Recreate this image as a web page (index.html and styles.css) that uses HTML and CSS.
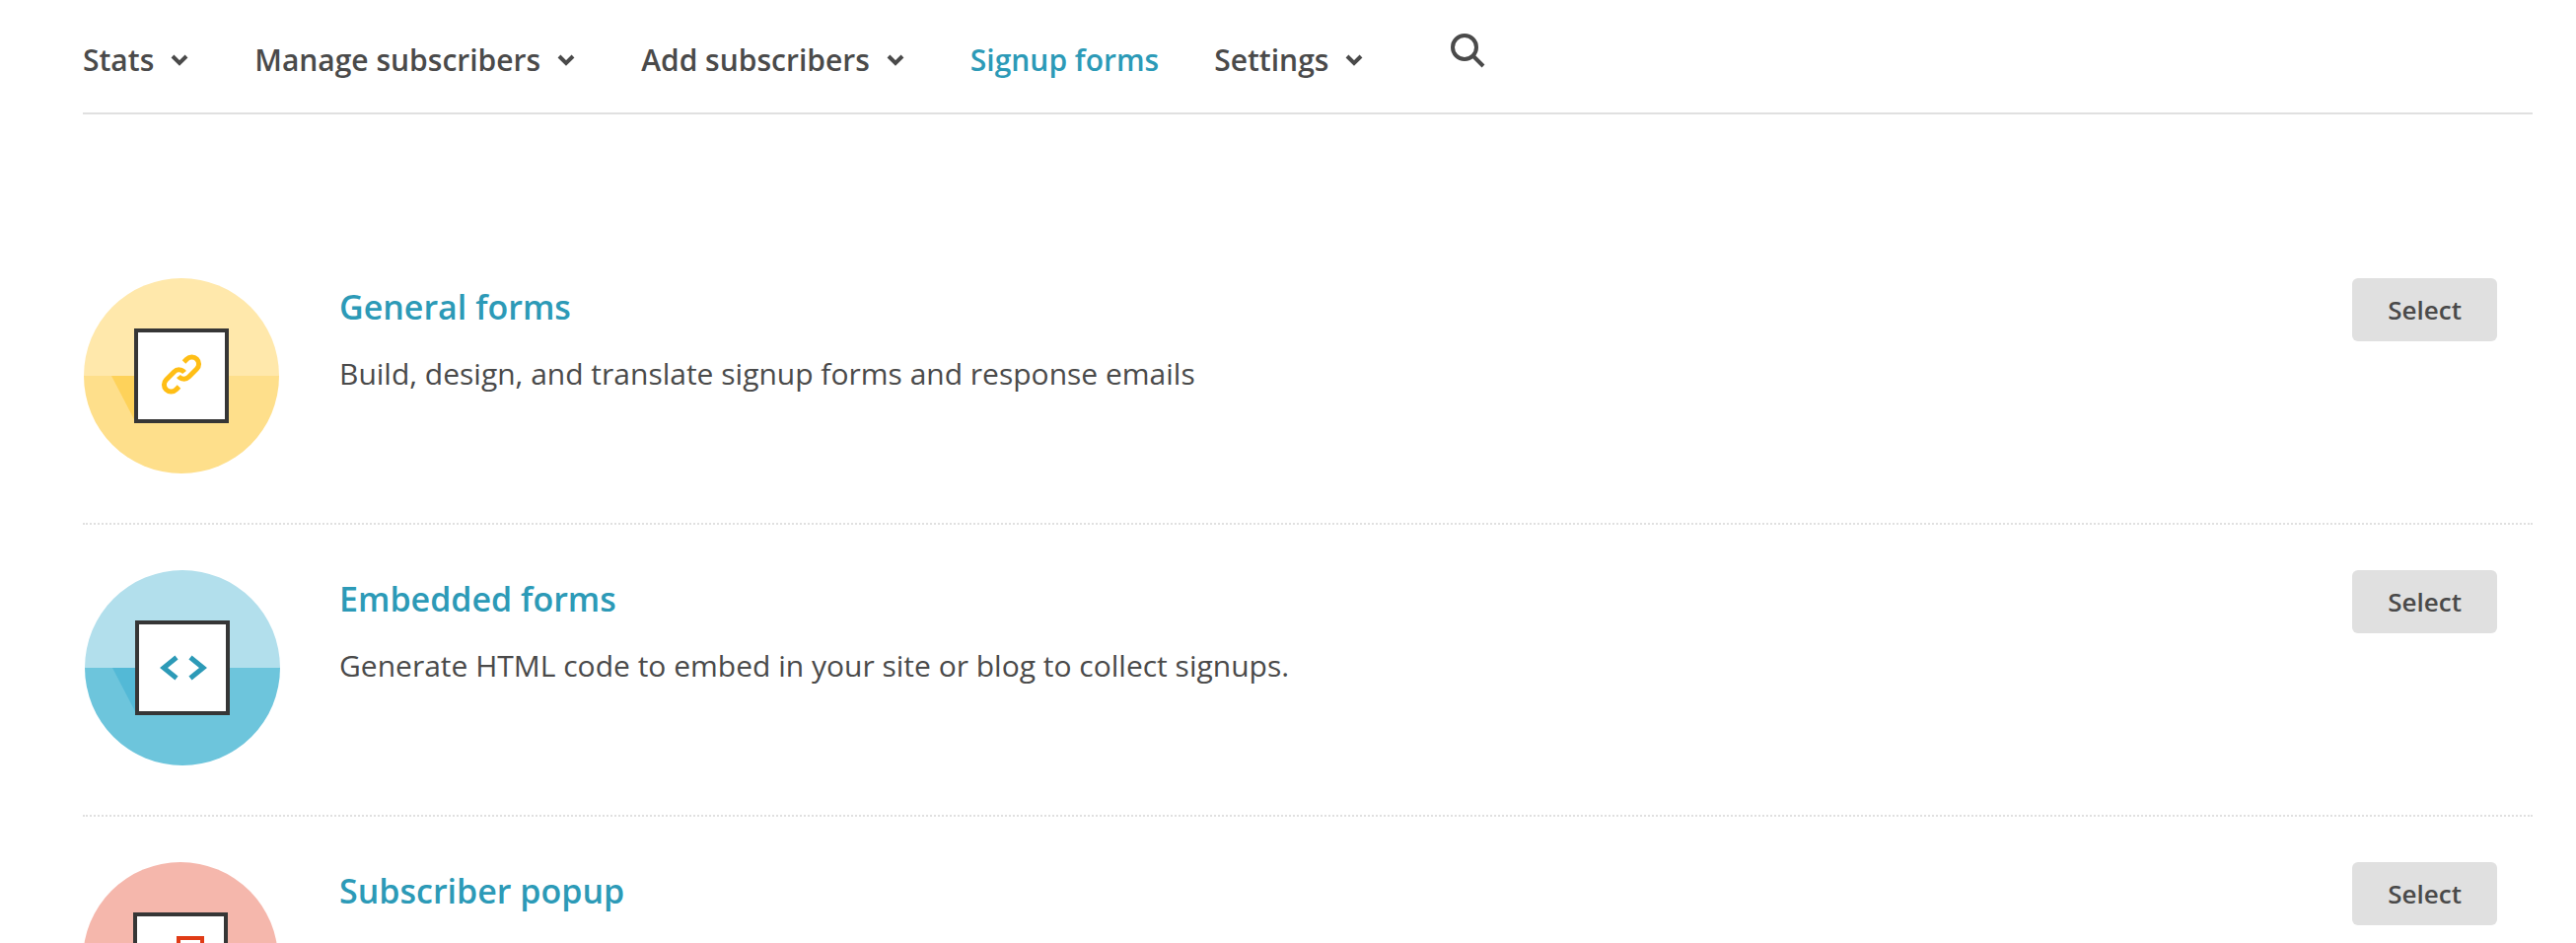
FILE: index.html
```
<!DOCTYPE html>
<html lang="en">
<head>
<meta charset="utf-8">
<meta name="viewport" content="width=device-width, initial-scale=1">
<title>Signup forms</title>
<link rel="stylesheet" href="styles.css">
</head>
<body>
<nav class="nav" aria-label="List">
  <button class="nav-item" type="button">Stats <svg class="chevron" viewBox="0 0 18 16" aria-hidden="true"><path d="M2 4l7 7 7-7"/></svg></button>
  <button class="nav-item" type="button">Manage subscribers <svg class="chevron" viewBox="0 0 18 16" aria-hidden="true"><path d="M2 4l7 7 7-7"/></svg></button>
  <button class="nav-item" type="button">Add subscribers <svg class="chevron" viewBox="0 0 18 16" aria-hidden="true"><path d="M2 4l7 7 7-7"/></svg></button>
  <a class="nav-item current" href="#" aria-current="page">Signup forms</a>
  <button class="nav-item" type="button">Settings <svg class="chevron" viewBox="0 0 18 16" aria-hidden="true"><path d="M2 4l7 7 7-7"/></svg></button>
  <button class="search" type="button" aria-label="Search"><svg class="search-icon" viewBox="0 0 36 36" aria-hidden="true"><circle cx="14" cy="14" r="12"/><path d="M22.500 22.500L33 33"/></svg></button>
</nav>
<main class="forms">
  <section class="form-row">
    <svg class="badge" viewBox="0 0 200 200" aria-hidden="true">
      <path fill="#ffe8ab" d="M1 99a99 99 0 0 1 198 0z"/>
      <path fill="#fedf8b" d="M1 99a99 99 0 0 0 198 0z"/>
      <path fill="#fed25a" d="M29 99h25v48z"/>
      <rect x="54" y="53" width="92" height="92" fill="#fff" stroke="#363636" stroke-width="4"/>
      <g fill="none" stroke="#ffbe15" stroke-width="5" transform="translate(100 97.500)">
        <path d="M2.500-12.500l3-3a7 7 0 0 1 10 10l-8 8a7 7 0 0 1-10.500-.5"/>
        <path d="M-2.500 12.500l-3 3a7 7 0 0 1-10-10l8-8a7 7 0 0 1 10.500.5"/>
      </g>
    </svg>
    <div class="info">
      <h2 class="title"><a href="#">General forms</a></h2>
      <p class="text">Build, design, and translate signup forms and response emails</p>
    </div>
    <button class="select" type="button">Select</button>
  </section>
  <section class="form-row">
    <svg class="badge" viewBox="0 0 200 200" aria-hidden="true">
      <path fill="#b2dfec" d="M2 99a99 99 0 0 1 198 0z"/>
      <path fill="#6dc5dc" d="M2 99a99 99 0 0 0 198 0z"/>
      <path fill="#53b9d6" d="M30 99h25v48z"/>
      <rect x="55" y="53" width="92" height="92" fill="#fff" stroke="#363636" stroke-width="4"/>
      <path fill="none" stroke="#2c9ab7" stroke-width="5" d="M95 88.500L82 99l13 10.500M109 88.500L122 99l-13 10.500"/>
    </svg>
    <div class="info">
      <h2 class="title"><a href="#">Embedded forms</a></h2>
      <p class="text">Generate HTML code to embed in your site or blog to collect signups.</p>
    </div>
    <button class="select" type="button">Select</button>
  </section>
  <section class="form-row">
    <svg class="badge" viewBox="0 0 200 200" aria-hidden="true">
      <path fill="#f5b7ac" d="M0 99a99 99 0 0 1 198 0z"/>
      <path fill="#ef8573" d="M0 99a99 99 0 0 0 198 0z"/>
      <rect x="53" y="53" width="92" height="92" fill="#fff" stroke="#363636" stroke-width="4"/>
      <rect x="97" y="77" width="24" height="24" fill="#fff" stroke="#e03b16" stroke-width="4"/>
    </svg>
    <div class="info">
      <h2 class="title"><a href="#">Subscriber popup</a></h2>
    </div>
    <button class="select" type="button">Select</button>
  </section>
</main>
</body>
</html>
```
FILE: styles.css
```
* { box-sizing: border-box; }

body {
  margin: 0;
  padding: 0 44px 0 84px;
  background: #fff;
  color: #4a4a4a;
  font-family: "Open Sans", sans-serif;
  font-size: 30px;
  line-height: 40px;
}

button {
  border: 0;
  padding: 0;
  background: none;
  color: inherit;
  font: inherit;
  font-weight: 600;
  cursor: pointer;
}

a { color: #2c9ab7; text-decoration: none; }

.nav {
  display: flex;
  align-items: flex-start;
  gap: 56px;
  padding: 34px 0 33px;
  border-bottom: 2px solid #e0e0e0;
}

.nav-item {
  display: flex;
  align-items: center;
  gap: 17px;
  padding-top: 7px;
  font-weight: 600;
  white-space: nowrap;
}

.chevron {
  width: 18px;
  height: 16px;
  margin-right: 11px;
  fill: none;
  stroke: currentColor;
  stroke-width: 4;
}

.search { margin-left: 22px; }

.search-icon {
  display: block;
  width: 36px;
  height: 36px;
  fill: none;
  stroke: currentColor;
  stroke-width: 4;
}

.forms { padding-top: 120px; }

.form-row {
  display: flex;
  align-items: flex-start;
  padding: 46px 36px 48px 0;
  border-bottom: 2px dotted #e0e0e0;
}

.badge {
  flex: none;
  width: 200px;
  height: 200px;
}

.info {
  flex: 1;
  padding: 7px 60px 0;
}

.title {
  margin: 0;
  font-size: 34px;
  font-weight: 600;
  line-height: 44px;
}

.text { margin: 26px 0 0; }

.select {
  padding: 12px 36px;
  border-radius: 6px;
  background: #e0e0e0;
  font-size: 26px;
}
```
